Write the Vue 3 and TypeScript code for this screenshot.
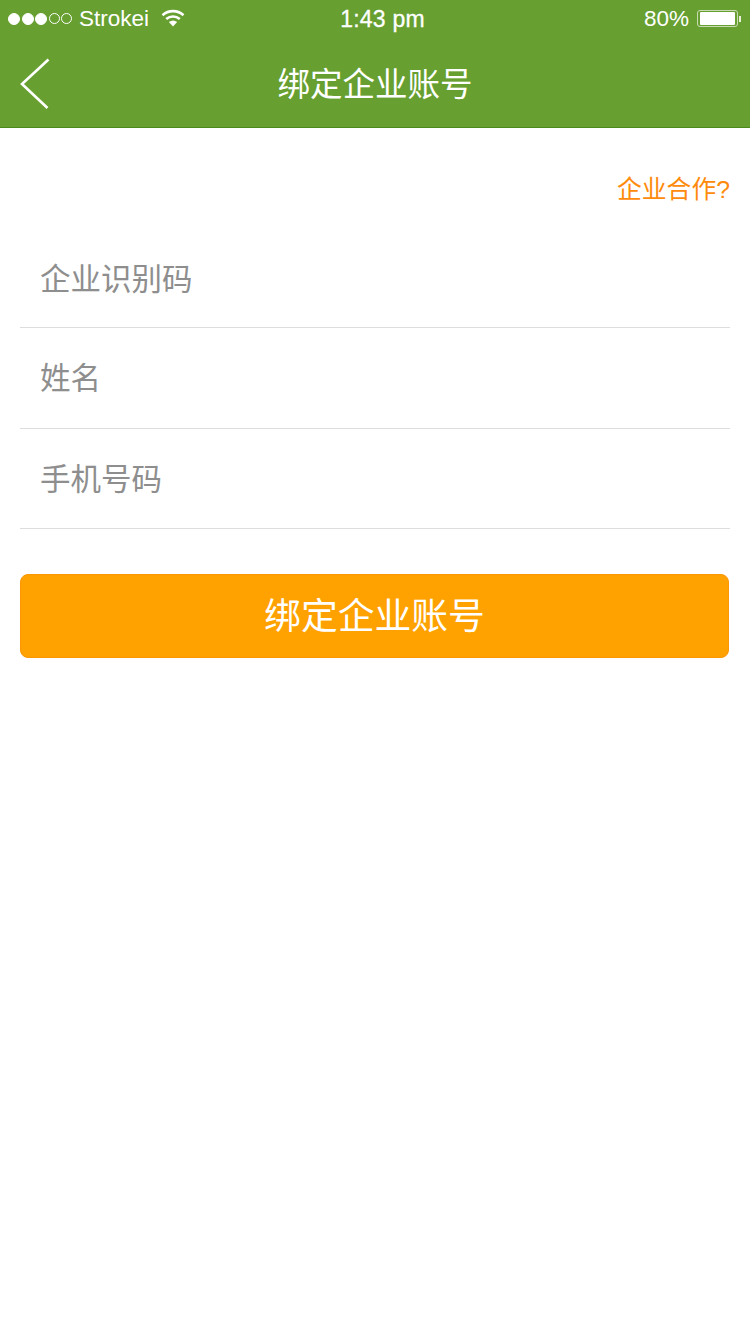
<script setup lang="ts">
const fields: string[] = ['企业识别码', '姓名', '手机号码']
</script>

<template>
  <div class="page">
    <header class="header">
      <div class="status">
        <div class="status-left">
          <div class="dots">
            <i class="dot on"></i><i class="dot on"></i><i class="dot on"></i><i class="dot"></i><i class="dot"></i>
          </div>
          <span class="carrier">Strokei</span>
          <svg class="wifi" width="24" height="18" viewBox="0 0 24 18">
            <path d="M1.5 6.2C7.5 .8 16.5 .8 22.5 6.2" fill="none" stroke="#fff" stroke-width="2.6" />
            <path d="M5.2 10C9.2 6.6 14.8 6.6 18.8 10" fill="none" stroke="#fff" stroke-width="2.6" />
            <path d="M7.8 13C10.6 11 13.4 11 16.2 13L12 17.4Z" fill="#fff" />
          </svg>
        </div>
        <span class="time">1:43 pm</span>
        <div class="status-right">
          <span class="percent">80%</span>
          <div class="battery"><div class="battery-fill"></div></div>
          <i class="battery-tip"></i>
        </div>
      </div>
      <div class="nav">
        <svg class="back" width="32" height="52" viewBox="0 0 32 52">
          <path d="M29.5 1.5L3 26L28.5 50" fill="none" stroke="#fff" stroke-width="2.6" />
        </svg>
        <h1 class="title">绑定企业账号</h1>
      </div>
    </header>

    <main class="main">
      <div class="help-row"><span class="help">企业合作?</span></div>
      <div class="form">
        <div v-for="f in fields" :key="f" class="field">{{ f }}</div>
      </div>
      <div class="submit">绑定企业账号</div>
    </main>
  </div>
</template>

<style>
body { margin: 0; background: #fff; }
</style>

<style scoped>
.page {
  width: 750px;
  height: 1334px;
  background: #fff;
  overflow: hidden;
  font-family: "Liberation Sans", "Noto Sans CJK SC", sans-serif;
}
.header {
  height: 127px;
  background: #679f31;
  border-bottom: 1px solid #4b8a1f;
  color: #fff;
}
.status {
  height: 38px;
  padding: 0 8px;
  display: grid;
  grid-template-columns: 1fr auto 1fr;
  align-items: center;
  font-size: 22.5px;
}
.status-left, .status-right { display: flex; align-items: center; }
.status-right { justify-content: flex-end; }
.dots { display: flex; gap: 1.5px; }
.dot {
  width: 11px;
  height: 11px;
  box-sizing: border-box;
  border: 1px solid #fff;
  border-radius: 50%;
}
.dot.on { background: #fff; width: 12px; height: 12px; margin-top: -0.5px; }
.carrier { margin-left: 7px; }
.wifi { margin-left: 12px; margin-top: -3px; }
.time { font-size: 23px; letter-spacing: 0.2px; -webkit-text-stroke: 0.3px #fff; margin-left: 15px; }
.percent { margin-right: 8px; }
.battery {
  width: 41px;
  height: 17px;
  box-sizing: border-box;
  border: 1px solid #c9dbb3;
  border-radius: 3px;
  padding: 1px 2px;
  margin-top: -1px;
}
.battery-fill { width: 35px; height: 13px; background: #fff; border-radius: 1px; }
.battery-tip { width: 2px; height: 6px; background: #e8f0dc; margin: -1px 1px 0 1px; }
.nav {
  position: relative;
  height: 89px;
  display: flex;
  align-items: center;
  justify-content: center;
}
.back { position: absolute; left: 19px; top: 20px; }
.title {
  margin: 0;
  font-size: 32.5px;
  font-weight: 400;
  line-height: 1;
  margin-top: 6px;
}
.main { padding: 0 20px; }
.help-row {
  display: flex;
  justify-content: flex-end;
  padding-top: 47px;
  height: 65px;
}
.help { font-size: 24.8px; line-height: 30px; color: #ff8a0c; }
.form { margin-top: -1px; }
.field {
  height: 100px;
  padding-left: 20px;
  border-bottom: 1px solid #dddddd;
  font-size: 30.5px;
  line-height: 101px;
  color: #8e8e8e;
}
.field:first-child { height: 88px; line-height: 80px; }
.field:last-child { height: 99px; line-height: 100px; }
.submit {
  width: 709px;
  height: 84px;
  box-sizing: border-box;
  margin-top: 45px;
  border: 1px solid #fb9605;
  border-radius: 8px;
  background: #ffa200;
  color: #fff;
  font-size: 36.8px;
  line-height: 83px;
  text-align: center;
}
</style>
